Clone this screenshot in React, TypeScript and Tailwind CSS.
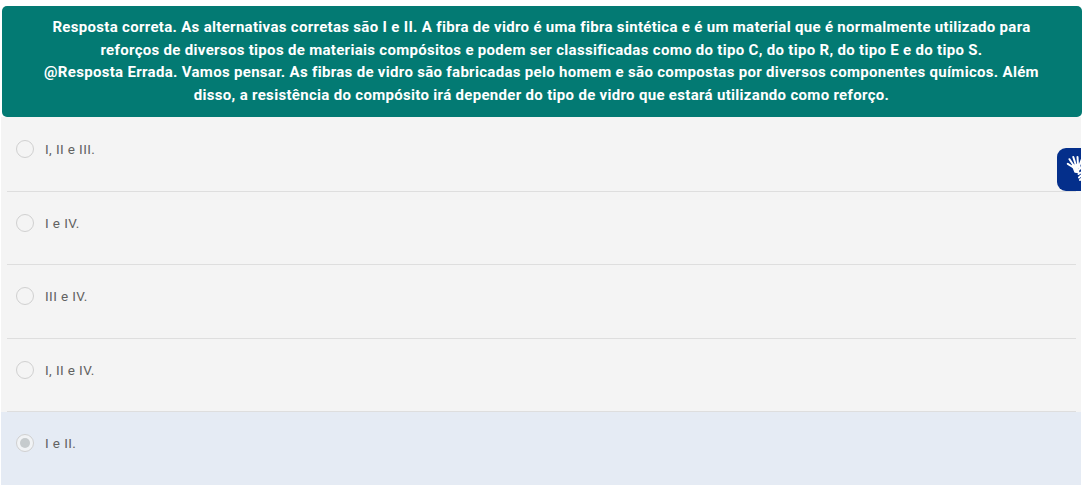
import clsx from 'clsx';

interface Option {
  id: number;
  label: string;
}

const FEEDBACK = [
  'Resposta correta. As alternativas corretas são I e II. A fibra de vidro é uma fibra sintética e é um material que é normalmente utilizado para',
  'reforços de diversos tipos de materiais compósitos e podem ser classificadas como do tipo C, do tipo R, do tipo E e do tipo S.',
  '@Resposta Errada. Vamos pensar. As fibras de vidro são fabricadas pelo homem e são compostas por diversos componentes químicos. Além',
  'disso, a resistência do compósito irá depender do tipo de vidro que estará utilizando como reforço.',
];

const OPTIONS: Option[] = [
  { id: 1, label: 'I, II e III.' },
  { id: 2, label: 'I e IV.' },
  { id: 3, label: 'III e IV.' },
  { id: 4, label: 'I, II e IV.' },
  { id: 5, label: 'I e II.' },
];

const SELECTED = 5;

function Radio({ checked }: { checked: boolean }) {
  return (
    <span className={clsx('flex items-center justify-center size-[18px] rounded-full border-[1.5px] border-[#d0d0d0]', checked && 'bg-[#f1f3f5]')}>
      {checked && <span className="size-[10px] rounded-full bg-[#c6cbcd]" />}
    </span>
  );
}

function OptionRow({ option, checked, last }: { option: Option; checked: boolean; last: boolean }) {
  return (
    <div className={clsx('h-[73.5px] pl-[6px] pr-[5px]', checked && 'bg-[#e5ebf4]')}>
      <div className={clsx('flex items-start h-full pt-[22px] pl-[9px]', !last && 'border-b border-[#dedede]')}>
        <Radio checked={checked} />
        <span className="ml-[11px] text-[13.5px] leading-[18px] tracking-[0.4px] text-[#626262]">{option.label}</span>
      </div>
    </div>
  );
}

function HandsIcon() {
  return (
    <svg width="24" height="28" viewBox="0 0 24 28" fill="none" stroke="#fff" strokeLinecap="round" strokeLinejoin="round">
      <path d="M6.5 11.5 12.5 10.5 14 13 11 15 13 18.5 9 18Z" fill="#fff" strokeWidth="1.5" />
      <path d="M7.5 13.5 1.8 9.8M8 12 3.5 5.2M10 11.5 7.3 3M12 11 11.5 3M13 12.5 15.5 6" strokeWidth="2" />
      <path d="M12.5 16 15 13.8M12.5 20 15 18.5M13 23.5 15 21.5M14 26 16 24" strokeWidth="1.9" />
    </svg>
  );
}

export default function App() {
  return (
    <div className="relative h-[485px] overflow-hidden bg-white px-px pt-[5.5px] font-['Roboto',sans-serif]">
      <div className="mr-[-0.5px] ml-[0.5px] h-[111.5px] rounded-[5px] bg-[#037a73] pt-[10.6px] text-center text-[15px] leading-[22.5px] font-bold tracking-[0.31px] text-white">
        {FEEDBACK.map((line) => (
          <p key={line} className="whitespace-nowrap">{line}</p>
        ))}
      </div>

      <div className="bg-[#f4f4f4] pt-[1px]">
        {OPTIONS.map((option, i) => (
          <OptionRow key={option.id} option={option} checked={option.id === SELECTED} last={i === OPTIONS.length - 1} />
        ))}
      </div>

      {/* Sign language widget, cut by the window edge */}
      <button className="absolute top-[148px] right-px flex items-start w-[24px] h-[43px] overflow-hidden rounded-l-[9px] bg-[#042f8b] pt-[6px] pl-[9px]">
        <span className="shrink-0">
          <HandsIcon />
        </span>
      </button>
    </div>
  );
}
